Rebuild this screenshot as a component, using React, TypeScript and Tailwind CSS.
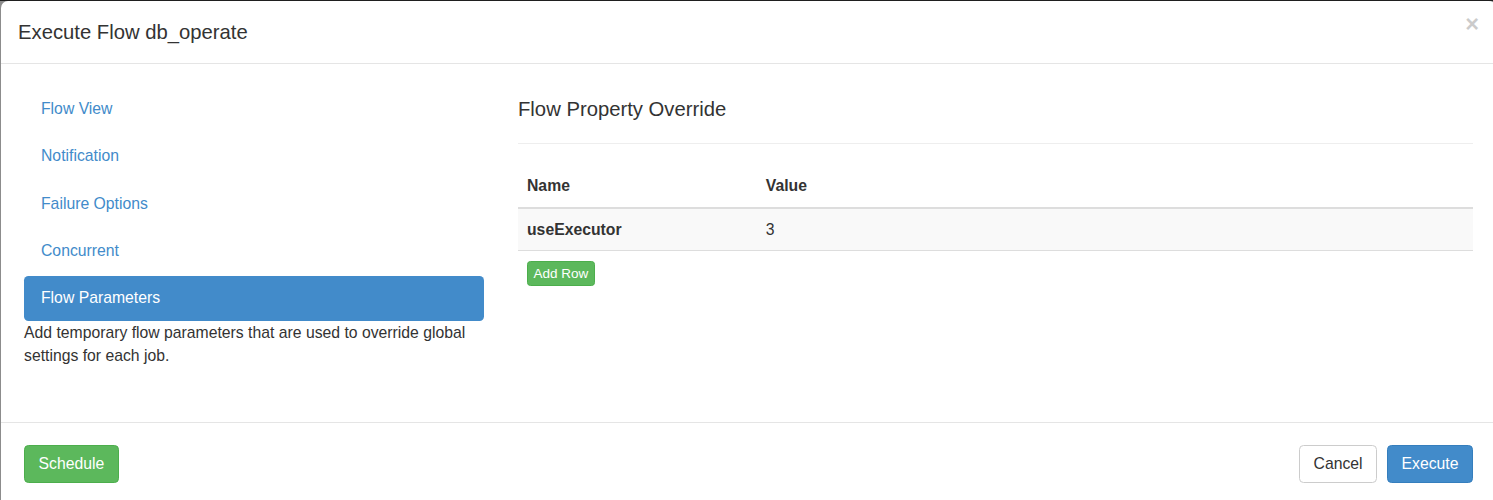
const navItems = ["Flow View", "Notification", "Failure Options", "Concurrent", "Flow Parameters"];

export default function App() {
  const active = "Flow Parameters";

  return (
    <div className="h-[500px] w-full overflow-hidden border-t border-[#1f1f1f] bg-[#8c8c8c] pl-px font-['Liberation_Sans',Arial,sans-serif] text-[15.75px] leading-[22.5px] text-[#333]">
      <div className="w-[1495px] rounded-t-[7px] bg-white">
        {/* Header */}
        <div className="flex h-[63px] items-center justify-between border-b border-[#e5e5e5] px-[17px]">
          <h4 className="text-[20.25px] leading-[28px]">Execute Flow db_operate</h4>
          <button className="-mt-[14px] text-[23.6px] font-bold leading-none text-black opacity-20">
            ×
          </button>
        </div>

        {/* Body */}
        <div className="flex h-[358px] gap-[34px] px-[23px] pt-[23px]">
          <div className="w-[460px] shrink-0">
            <ul className="flex flex-col gap-[2.25px]">
              {navItems.map((item) => (
                <li key={item}>
                  <a
                    className={
                      item === active
                        ? "block h-[45px] rounded-[4.5px] bg-[#428bca] px-[17px] py-[11px] text-white"
                        : "block h-[45px] rounded-[4.5px] px-[17px] py-[11px] text-[#428bca]"
                    }
                  >
                    {item}
                  </a>
                </li>
              ))}
            </ul>
            <p className="mt-[1px]">
              Add temporary flow parameters that are used to override global settings for each job.
            </p>
          </div>

          <div className="w-[955px] shrink-0">
            <h4 className="mt-[11px] border-b border-[#eee] pb-[23px] text-[20.25px] leading-[22px]">
              Flow Property Override
            </h4>
            <table className="mt-[22px] w-full border-collapse">
              <thead>
                <tr className="border-b-2 border-[#ddd]">
                  <th className="w-1/4 px-[9px] py-[9px] text-left font-bold">Name</th>
                  <th className="px-[9px] py-[9px] text-left font-bold">Value</th>
                </tr>
              </thead>
              <tbody>
                <tr className="border-b border-[#ddd] bg-[#f9f9f9]">
                  <td className="px-[9px] pt-[10px] pb-[9px] font-bold">useExecutor</td>
                  <td className="px-[9px] pt-[10px] pb-[9px]">3</td>
                </tr>
                <tr>
                  <td className="px-[9px] pt-[10px]" colSpan={2}>
                    <button className="h-[25px] rounded-[3.4px] border border-[#4cae4c] bg-[#5cb85c] px-[5.6px] text-[13.5px] leading-[20px] text-white">
                      Add Row
                    </button>
                  </td>
                </tr>
              </tbody>
            </table>
          </div>
        </div>

        {/* Footer */}
        <div className="flex items-start justify-between border-t border-[#e5e5e5] px-[23px] pt-[22px] pb-[22px]">
          <button className="h-[38px] rounded-[4.5px] border border-[#4cae4c] bg-[#5cb85c] px-[13.5px] text-white">
            Schedule
          </button>
          <div className="flex gap-[10px]">
            <button className="h-[38px] rounded-[4.5px] border border-[#ccc] bg-white px-[13.5px] text-[#333]">
              Cancel
            </button>
            <button className="h-[38px] rounded-[4.5px] border border-[#357ebd] bg-[#428bca] px-[13.5px] text-white">
              Execute
            </button>
          </div>
        </div>
      </div>
    </div>
  );
}
